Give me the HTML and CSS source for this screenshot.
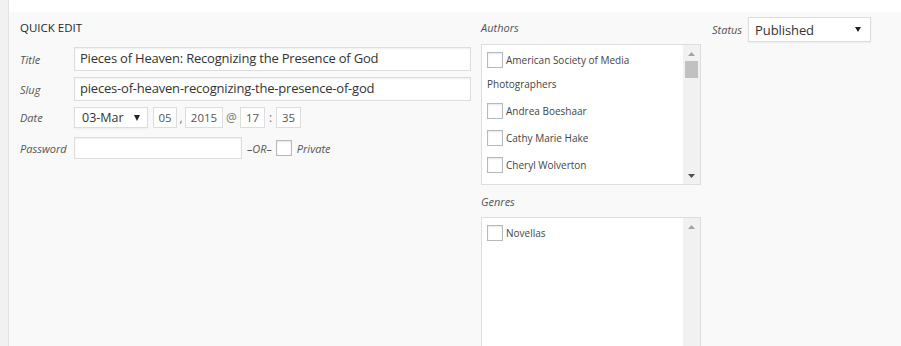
FILE: index.html
```html
<!DOCTYPE html>
<html lang="en">
<head>
    <meta charset="UTF-8">
    <meta name="viewport" content="width=device-width, initial-scale=1.0">
    <title>Quick Edit</title>
    <link rel="stylesheet" href="styles.css">
</head>
<body>
    <div class="row-wrap">
        <div class="quick-edit">
            <div class="col-left">
                <div class="legend">Quick Edit</div>
                <div class="field">
                    <span class="field-label">Title</span>
                    <span class="text-input wide">Pieces of Heaven: Recognizing the Presence of God</span>
                </div>
                <div class="field">
                    <span class="field-label">Slug</span>
                    <span class="text-input wide">pieces-of-heaven-recognizing-the-presence-of-god</span>
                </div>
                <div class="field date-field">
                    <span class="field-label">Date</span>
                    <span class="select select-month">
                        <span>03-Mar</span>
                        <svg width="6" height="6" viewBox="0 0 6 6"><polygon points="0,0 6,0 3,6" fill="#222"/></svg>
                    </span>
                    <span class="small-input day">05</span>
                    <span class="sep sep-comma">,</span>
                    <span class="small-input year">2015</span>
                    <span class="sep sep-at">@</span>
                    <span class="small-input hour">17</span>
                    <span class="sep sep-colon">:</span>
                    <span class="small-input minute">35</span>
                </div>
                <div class="field password-field">
                    <span class="field-label">Password</span>
                    <span class="text-input password"></span>
                    <span class="or-text">–OR–</span>
                    <span class="checkbox"></span>
                    <span class="private-text">Private</span>
                </div>
            </div>

            <div class="col-mid">
                <div class="col-label">Authors</div>
                <div class="checklist-box">
                    <ul class="checklist">
                        <li><span class="checkbox"></span>American Society of Media Photographers</li>
                        <li><span class="checkbox"></span>Andrea Boeshaar</li>
                        <li><span class="checkbox"></span>Cathy Marie Hake</li>
                        <li><span class="checkbox"></span>Cheryl Wolverton</li>
                    </ul>
                    <div class="scrollbar">
                        <svg class="arrow-up" width="7" height="4" viewBox="0 0 7 4"><polygon points="3.5,0 7,4 0,4" fill="#a3a3a3"/></svg>
                        <div class="thumb"></div>
                        <div class="spacer"></div>
                        <svg class="arrow-down" width="7" height="4" viewBox="0 0 7 4"><polygon points="0,0 7,0 3.5,4" fill="#505050"/></svg>
                    </div>
                </div>

                <div class="col-label genres-label">Genres</div>
                <div class="checklist-box tall">
                    <ul class="checklist">
                        <li><span class="checkbox"></span>Novellas</li>
                    </ul>
                    <div class="scrollbar">
                        <svg class="arrow-up" width="7" height="4" viewBox="0 0 7 4"><polygon points="3.5,0 7,4 0,4" fill="#a3a3a3"/></svg>
                    </div>
                </div>
            </div>

            <div class="col-right">
                <span class="status-label">Status</span>
                <span class="select select-status">
                    <span>Published</span>
                    <svg width="6" height="5" viewBox="0 0 6 5"><polygon points="0,0 6,0 3,5" fill="#222"/></svg>
                </span>
            </div>
        </div>
    </div>
</body>
</html>
```

FILE: styles.css
```css
body {
    margin: 0;
    background-color: #f1f1f1;
    font-family: "Open Sans", "Liberation Sans", sans-serif;
    color: #32373c;
}
.row-wrap {
    margin-left: 8px;
    border-left: 1px solid #e1e1e1;
    background-color: #fff;
    padding-top: 12px;
    height: 334px;
    overflow: hidden;
}
.quick-edit {
    display: flex;
    height: 100%;
    padding-left: 11px;
    background-color: #f9f9f9;
}
.col-left {
    width: 451px;
    margin-right: 10px;
}
.legend {
    font-size: 11.5px;
    font-weight: 400;
    text-transform: uppercase;
    line-height: 16px;
    padding-top: 8px;
    margin-bottom: 11px;
    color: #23282d;
}
.field {
    display: flex;
    align-items: center;
    margin-bottom: 6px;
}
.field-label {
    width: 54px;
    flex-shrink: 0;
    font-size: 11px;
    font-style: italic;
    color: #555;
}
.text-input {
    box-sizing: border-box;
    height: 24px;
    padding: 0 5px;
    border: 1px solid #ddd;
    background-color: #fff;
    box-shadow: inset 0 1px 2px rgba(0,0,0,0.07);
    font-size: 13px;
    letter-spacing: -0.2px;
    line-height: 21px;
    color: #333;
    white-space: nowrap;
    overflow: hidden;
}
.wide {
    width: 397px;
}
.date-field {
    margin-bottom: 9px;
}
.select {
    box-sizing: border-box;
    display: flex;
    align-items: center;
    justify-content: space-between;
    border: 1px solid #ddd;
    background-color: #fff;
    box-shadow: 0 1px 2px rgba(0,0,0,0.05);
    color: #333;
}
.select-month {
    width: 74px;
    height: 21px;
    padding: 0 7px 0 7px;
    font-size: 12.5px;
}
.small-input {
    box-sizing: border-box;
    height: 21px;
    border: 1px solid #ddd;
    background-color: #fff;
    font-size: 11.5px;
    line-height: 19px;
    text-align: center;
    color: #555;
}
.day {
    width: 24px;
    margin-left: 5px;
}
.year {
    width: 38px;
}
.hour,
.minute {
    width: 25px;
}
.sep {
    font-size: 12px;
    color: #777;
    text-align: center;
}
.sep-comma {
    width: 8px;
}
.sep-at {
    width: 17px;
}
.sep-colon {
    width: 11px;
}
.password {
    width: 168px;
    height: 22px;
}
.or-text,
.private-text {
    font-size: 11px;
    font-style: italic;
    color: #555;
}
.or-text {
    margin-left: 5px;
}
.private-text {
    margin-left: 5px;
}
.checkbox {
    box-sizing: border-box;
    display: inline-block;
    width: 16px;
    height: 16px;
    border: 1px solid #b4b9be;
    background-color: #fff;
    box-shadow: inset 0 1px 2px rgba(0,0,0,0.1);
    vertical-align: middle;
    margin: -2px 3px 0 0;
}
.password-field .checkbox {
    margin: 0 0 0 4px;
}
.col-mid {
    width: 220px;
    flex-shrink: 0;
    margin-right: 11px;
}
.col-label {
    font-size: 11px;
    font-style: italic;
    color: #555;
    line-height: 16px;
    padding-top: 8px;
    margin-bottom: 8px;
}
.genres-label {
    padding-top: 1px;
    margin-top: 8px;
    margin-bottom: 7px;
}
.checklist-box {
    box-sizing: border-box;
    display: flex;
    height: 141px;
    border: 1px solid #ddd;
    background-color: #fff;
}
.checklist-box.tall {
    height: 160px;
}
.checklist {
    flex: 1;
    list-style: none;
    margin: 0;
    padding: 3px 5px;
    font-size: 10px;
    color: #444;
}
.checklist li {
    line-height: 24px;
    margin-bottom: 3px;
}
.scrollbar {
    width: 17px;
    display: flex;
    flex-direction: column;
    align-items: center;
    background-color: #f1f1f1;
}
.arrow-up {
    margin-top: 7px;
}
.thumb {
    width: 13px;
    height: 17px;
    margin-top: 5px;
    background-color: #c1c1c1;
}
.spacer {
    flex: 1;
}
.arrow-down {
    margin-bottom: 6px;
}
.col-right {
    display: flex;
    align-items: center;
    align-self: flex-start;
    margin-top: 5px;
}
.status-label {
    font-size: 11px;
    font-style: italic;
    color: #555;
    margin-right: 6px;
}
.select-status {
    width: 123px;
    height: 25px;
    padding: 0 9px 0 6px;
    font-size: 13px;
    letter-spacing: -0.1px;
}
```
